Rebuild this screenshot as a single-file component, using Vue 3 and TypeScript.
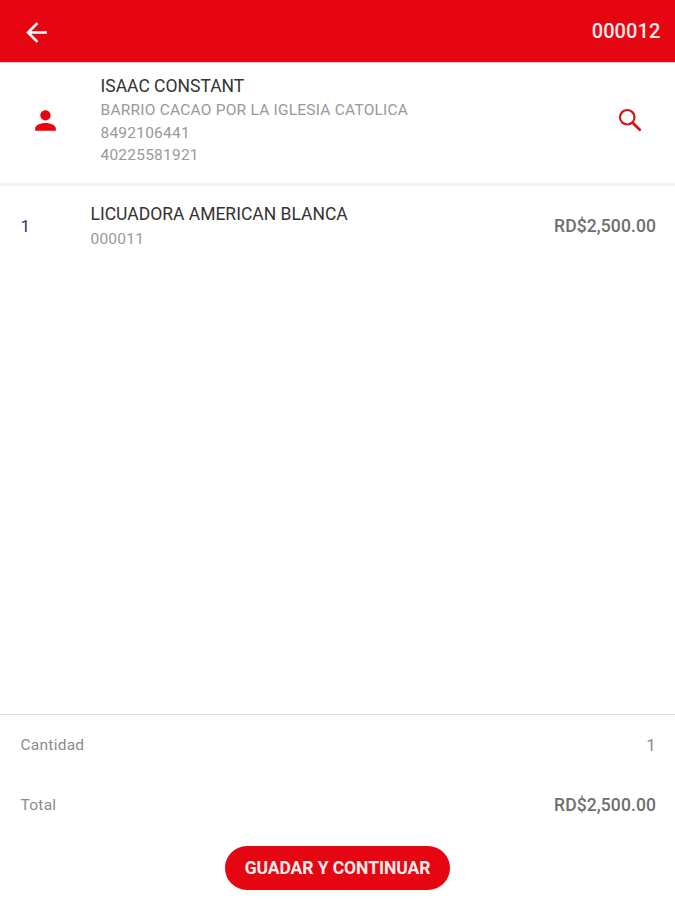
<script setup lang="ts">
interface Customer { name: string; address: string; phone: string; id: string }
interface Item { quantity: number; name: string; code: string; price: string }

const customer: Customer = {
  name: 'ISAAC CONSTANT',
  address: 'BARRIO CACAO POR LA IGLESIA CATOLICA',
  phone: '8492106441',
  id: '40225581921',
}
const items: Item[] = [
  { quantity: 1, name: 'LICUADORA AMERICAN BLANCA', code: '000011', price: 'RD$2,500.00' },
]
</script>

<template>
  <main class="screen">
    <header class="bar">
      <svg class="back" viewBox="0 0 24 24"><path d="M20 11H7.83l5.59-5.59L12 4l-8 8 8 8 1.41-1.41L7.83 13H20v-2z" /></svg>
      <span class="number">000012</span>
    </header>
    <section class="customer">
      <svg class="person" viewBox="0 0 24 24"><path d="M12 12c2.21 0 4-1.79 4-4s-1.79-4-4-4-4 1.79-4 4 1.79 4 4 4zm0 2c-2.67 0-8 1.34-8 4v2h16v-2c0-2.66-5.33-4-8-4z" /></svg>
      <div class="details">
        <div class="name">{{ customer.name }}</div>
        <div class="line">{{ customer.address }}</div>
        <div class="line">{{ customer.phone }}</div>
        <div class="line">{{ customer.id }}</div>
      </div>
      <svg class="search" viewBox="0 0 24 24"><circle cx="9.8" cy="9.8" r="5.8" /><path d="M14 14l1.2 1.2" /><path class="handle" d="M14.8 14.8l5 5" /></svg>
    </section>
    <section class="items">
      <div v-for="item in items" :key="item.code" class="item">
        <span class="quantity">{{ item.quantity }}</span>
        <div class="product">
          <div class="name">{{ item.name }}</div>
          <div class="line">{{ item.code }}</div>
        </div>
        <span class="price">{{ item.price }}</span>
      </div>
    </section>
    <footer class="summary">
      <div class="row"><span>Cantidad</span><span class="count">1</span></div>
      <div class="row"><span>Total</span><span class="price">RD$2,500.00</span></div>
      <button class="save" type="button">GUADAR Y CONTINUAR</button>
    </footer>
  </main>
</template>

<style>
body { margin: 0; background: #fff; }
</style>

<style scoped>
.screen { display: flex; flex-direction: column; height: 900px; font-family: Roboto, sans-serif; background: #fff; overflow: hidden; }
.bar { display: flex; box-sizing: border-box; height: 62px; padding: 0 14.5px 0 21px; align-items: center; justify-content: space-between; background: #e60611; color: #fff; }
.back { width: 31px; height: 31px; margin-top: 2px; fill: #fff; }
.number { font-size: 20px; font-weight: 500; letter-spacing: 0.1px; color: #ffe9e9; }
.customer { display: flex; box-sizing: border-box; height: 124px; padding: 12px 30px 0 30px; border-top: 1px solid #fbc4c6; border-bottom: 3px solid #f3f3f3; }
.person { width: 31px; height: 31px; margin-top: 30px; fill: #e60611; }
.details { flex: 1; margin-left: 39.5px; }
.name { font-size: 17.5px; line-height: 22px; color: #333; font-weight: 400; letter-spacing: 0; white-space: nowrap; }
.line { font-size: 15.5px; line-height: 22.5px; color: #999; letter-spacing: 0.22px; white-space: nowrap; }
.name + .line { margin-top: 2px; }
.product .name + .line { margin-top: 3px; }
.search { width: 30px; height: 30px; margin-top: 30px; fill: none; stroke: #d9131c; stroke-width: 1.75; }
.search .handle { stroke-width: 2.2; stroke-linecap: round; }
.items { flex: 1; }
.item { display: flex; height: 80px; padding: 0 19px 0 20.5px; align-items: center; }
.quantity { width: 70px; font-size: 17px; color: #263870; }
.product { flex: 1; padding-top: 2px; }
.price { font-size: 17.5px; font-weight: 500; letter-spacing: 0.1px; color: #6f6f6f; }
.summary { display: flex; box-sizing: border-box; height: 186px; flex-direction: column; border-top: 1px solid #ddd; }
.row { display: flex; height: 60px; padding: 0 19px 0 20.5px; align-items: center; justify-content: space-between; font-size: 15.5px; letter-spacing: 0.25px; color: #8c8c8c; }
.row .price { letter-spacing: 0.1px; }
.count { font-size: 17px; }
.save { width: 225px; height: 44px; margin: 11px auto 0; padding: 0 0 1px; border: 0; border-radius: 22px; background: #e60611; color: #ffecec; font: 700 17.5px Roboto, sans-serif; letter-spacing: -0.07px; white-space: nowrap; }
</style>
